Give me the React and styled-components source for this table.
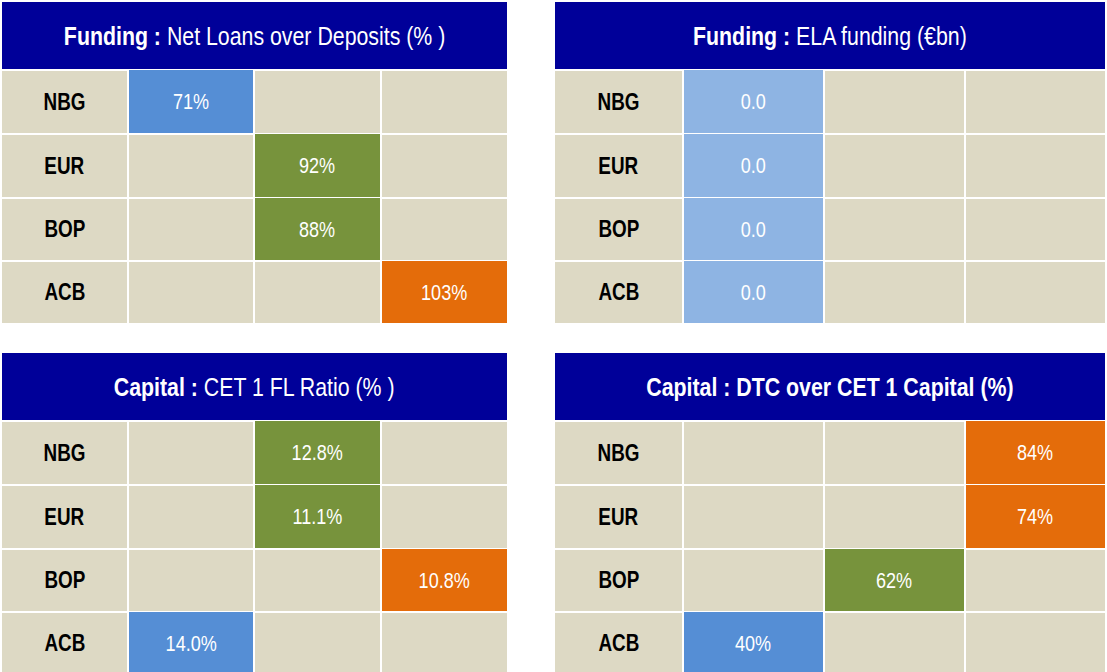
import React from 'react'
import styled, { createGlobalStyle } from 'styled-components'

const GlobalStyle = createGlobalStyle`
  html, body {
    margin: 0;
    padding: 0;
    background: #ffffff;
  }
  body {
    font-family: "Liberation Sans", Arial, sans-serif;
  }
`

const colors = {
  navy: '#000099',
  tan: '#ddd9c4',
  blue: '#558ed5',
  lightBlue: '#8eb4e3',
  green: '#77933c',
  orange: '#e46c0a'
}

const Board = styled.div`
  display: grid;
  grid-template-columns: 505px 550px;
  grid-template-rows: 321px 321px;
  column-gap: 48px;
  row-gap: 30px;
  padding: 2px 0 0 2px;
  width: 1105px;
`

const Panel = styled.section`
  display: flex;
  flex-direction: column;
  gap: 2px;
`

// the deck uses Arial Narrow; squeeze the sans face to the same width
const Narrow = styled.span`
  display: inline-block;
  white-space: pre;
  transform: scaleX(0.82);
  transform-origin: center;
`

const Header = styled.header`
  height: 67px;
  background: ${colors.navy};
  color: #ffffff;
  display: flex;
  align-items: center;
  justify-content: center;
  font-size: 26px;
  padding-top: 2px;
  box-sizing: border-box;
`

const Strong = styled.span`
  font-weight: 700;
`

const Grid = styled.div`
  display: grid;
  grid-template-columns: ${p => p.cols};
  grid-template-rows: 62px 62px 61px 61px;
  gap: 2px;
`

const Label = styled.div`
  background: ${colors.tan};
  color: #000000;
  font-weight: 700;
  font-size: 23px;
  display: flex;
  align-items: center;
  justify-content: center;
`

const Cell = styled.div`
  background: ${p => (p.tone ? colors[p.tone] : colors.tan)};
  box-shadow: ${p => (p.tone ? `0 -1px 0 ${colors[p.tone]}` : 'none')};
  color: #ffffff;
  font-size: 22px;
  display: flex;
  align-items: center;
  justify-content: center;
`

const panels = [
  {
    title: 'Funding :',
    rest: ' Net Loans over Deposits (% )',
    cols: '125px 124px 125px 125px',
    rows: [
      ['NBG', 0, '71%', 'blue'],
      ['EUR', 1, '92%', 'green'],
      ['BOP', 1, '88%', 'green'],
      ['ACB', 2, '103%', 'orange']
    ]
  },
  {
    title: 'Funding :',
    rest: ' ELA funding (€bn)',
    cols: '127px 139px 139px 139px',
    rows: [
      ['NBG', 0, '0.0', 'lightBlue'],
      ['EUR', 0, '0.0', 'lightBlue'],
      ['BOP', 0, '0.0', 'lightBlue'],
      ['ACB', 0, '0.0', 'lightBlue']
    ]
  },
  {
    title: 'Capital :',
    rest: ' CET 1 FL Ratio (% )',
    cols: '125px 124px 125px 125px',
    rows: [
      ['NBG', 1, '12.8%', 'green'],
      ['EUR', 1, '11.1%', 'green'],
      ['BOP', 2, '10.8%', 'orange'],
      ['ACB', 0, '14.0%', 'blue']
    ]
  },
  {
    title: 'Capital : DTC over CET 1 Capital (%)',
    rest: '',
    cols: '127px 139px 139px 139px',
    rows: [
      ['NBG', 2, '84%', 'orange'],
      ['EUR', 2, '74%', 'orange'],
      ['BOP', 1, '62%', 'green'],
      ['ACB', 0, '40%', 'blue']
    ]
  }
]

function ScorePanel({ panel }) {
  return (
    <Panel>
      <Header>
        <Narrow>
          <Strong>{panel.title}</Strong>
          {panel.rest}
        </Narrow>
      </Header>
      <Grid cols={panel.cols}>
        {panel.rows.map(([name, col, value, tone]) => (
          <React.Fragment key={name}>
            <Label>
              <Narrow>{name}</Narrow>
            </Label>
            {[0, 1, 2].map(i =>
              i === col ? (
                <Cell key={i} tone={tone}>
                  <Narrow>{value}</Narrow>
                </Cell>
              ) : (
                <Cell key={i} />
              )
            )}
          </React.Fragment>
        ))}
      </Grid>
    </Panel>
  )
}

export default function App() {
  return (
    <>
      <GlobalStyle />
      <Board>
        {panels.map((p, i) => (
          <ScorePanel key={i} panel={p} />
        ))}
      </Board>
    </>
  )
}
